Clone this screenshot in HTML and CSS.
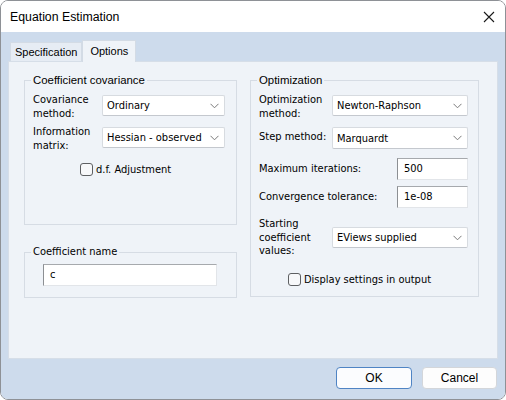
FILE: index.html
```html
<!DOCTYPE html>
<html>
<head>
<meta charset="utf-8">
<link rel="stylesheet" href="styles.css">
</head>
<body>
<div class="window">
  <div class="titlebar">
    <span class="title">Equation Estimation</span>
    <svg class="close" width="12" height="12" viewBox="0 0 12 12"><path d="M1 1 L11 11 M11 1 L1 11" stroke="#1a1a1a" stroke-width="1.1" fill="none"/></svg>
  </div>
  <div class="body">
    <div class="tabs">
      <div class="tab">Specification</div>
      <div class="tab active">Options</div>
    </div>
    <div class="panel">
      <div class="col">
        <fieldset class="group g-cov">
          <legend class="legend seg">Coefficient covariance</legend>
          <div class="row">
            <div class="label w69">Covariance<br>method:</div>
            <div class="select w123"><span>Ordinary</span><svg class="chev" width="9" height="6" viewBox="0 0 9 6"><path d="M0.5 0.8 L4.5 4.8 L8.5 0.8" stroke="#7a7a7a" fill="none"/></svg></div>
          </div>
          <div class="row">
            <div class="label w69">Information<br>matrix:</div>
            <div class="select w123"><span>Hessian - observed</span><svg class="chev" width="9" height="6" viewBox="0 0 9 6"><path d="M0.5 0.8 L4.5 4.8 L8.5 0.8" stroke="#7a7a7a" fill="none"/></svg></div>
          </div>
          <div class="check-row cr-left">
            <span class="box"></span><span>d.f. Adjustment</span>
          </div>
        </fieldset>
        <fieldset class="group g-name">
          <legend class="legend name-legend">Coefficient name</legend>
          <div class="input name-input">c</div>
        </fieldset>
      </div>
      <fieldset class="group g-opt">
        <legend class="legend seg">Optimization</legend>
        <div class="row">
          <div class="label w73">Optimization<br>method:</div>
          <div class="select w136"><span>Newton-Raphson</span><svg class="chev" width="9" height="6" viewBox="0 0 9 6"><path d="M0.5 0.8 L4.5 4.8 L8.5 0.8" stroke="#7a7a7a" fill="none"/></svg></div>
        </div>
        <div class="row step">
          <div class="label w73 mid">Step method:</div>
          <div class="select w136 tall"><span>Marquardt</span><svg class="chev" width="9" height="6" viewBox="0 0 9 6"><path d="M0.5 0.8 L4.5 4.8 L8.5 0.8" stroke="#7a7a7a" fill="none"/></svg></div>
        </div>
        <div class="row field r-max">
          <div class="label grow">Maximum iterations:</div>
          <div class="input num">500</div>
        </div>
        <div class="row field r-conv">
          <div class="label grow">Convergence tolerance:</div>
          <div class="input num">1e-08</div>
        </div>
        <div class="row r-start">
          <div class="label w73 lh13">Starting<br>coefficient<br>values:</div>
          <div class="select w136 s-start"><span>EViews supplied</span><svg class="chev" width="9" height="6" viewBox="0 0 9 6"><path d="M0.5 0.8 L4.5 4.8 L8.5 0.8" stroke="#7a7a7a" fill="none"/></svg></div>
        </div>
        <div class="check-row cr-right">
          <span class="box"></span><span>Display settings in output</span>
        </div>
      </fieldset>
    </div>
    <div class="buttons">
      <div class="btn default">OK</div>
      <div class="btn">Cancel</div>
    </div>
  </div>
</div>
</body>
</html>
```
FILE: styles.css
```css
html, body {
  margin: 0;
  padding: 0;
  background: #ffffff;
}
.window {
  width: 506px;
  height: 400px;
  box-sizing: border-box;
  border: 1px solid #8e9196;
  border-radius: 8px;
  overflow: hidden;
  display: flex;
  flex-direction: column;
  font-family: "DejaVu Sans", sans-serif;
  font-stretch: condensed;
  font-size: 11px;
  color: #000;
}
.titlebar {
  height: 31px;
  background: #ffffff;
  display: flex;
  align-items: center;
  justify-content: space-between;
  padding: 0 10px 0 9px;
  font-family: "Liberation Sans", sans-serif;
  font-stretch: normal;
  font-size: 12.3px;
}
.close { margin-right: 0; }
.body {
  flex: 1;
  background: #cddbec;
  padding: 7px 7px 0 7px;
  display: flex;
  flex-direction: column;
}
.tabs {
  display: flex;
  height: 22px;
  align-items: flex-end;
  padding-left: 2px;
  font-family: "Liberation Sans", sans-serif;
  font-stretch: normal;
  font-size: 11px;
}
.tab {
  height: 18px;
  line-height: 19px;
  padding: 0 4px;
  background: #e6ecf4;
  border: 1px solid #d3dbe5;
  border-bottom: none;
}
.tab.active {
  height: 21px;
  line-height: 20px;
  background: #eff3f8;
  padding: 0 7px;
  margin-left: 0;
  position: relative;
  top: 1px;
}
.panel {
  height: 298px;
  box-sizing: border-box;
  background: #eff3f8;
  border: 1px solid #d6dee8;
  padding: 11px 0 0 15px;
  display: grid;
  grid-template-columns: 213px 229px;
  column-gap: 13px;
  align-items: start;
}
.col {
  display: flex;
  flex-direction: column;
  gap: 20px;
}
.group {
  margin: 0;
  border: 1px solid #d6dce4;
  padding: 0 0 0 8px;
  min-width: 0;
}
.legend {
  padding: 0 2px;
  margin-left: -2px;
  line-height: 14px;
  font-size: 11px;
}
.legend.seg {
  font-family: "Liberation Sans", sans-serif;
  font-stretch: normal;
  font-size: 11.4px;
}
.name-legend { margin-left: -12px; }
.g-cov { height: 152px; box-sizing: border-box; padding-top: 6px; }
.g-name { height: 53px; box-sizing: border-box; padding: 5px 0 0 18px; }
.g-opt { height: 224px; box-sizing: border-box; padding-top: 6px; }
.row {
  display: flex;
  align-items: flex-start;
  margin-bottom: 4px;
}
.label {
  line-height: 14px;
  flex: none;
}
.lh13 { line-height: 13.5px; }
.w69 { width: 69px; }
.w73 { width: 73px; }
.grow { flex: 1; }
.select {
  box-sizing: border-box;
  height: 21px;
  margin-top: 2px;
  background: #ffffff;
  border: 1px solid #d7dbe0;
  border-bottom-color: #c4c8ce;
  border-radius: 2px;
  display: flex;
  align-items: center;
  justify-content: space-between;
  padding: 0 5px 0 4px;
}
.w123 { width: 123px; }
.w136 { width: 136px; }
.select.tall { height: 22px; }
.mid { align-self: center; }
.step { margin-top: 2px; margin-bottom: 9px; }
.input {
  box-sizing: border-box;
  background: #ffffff;
  border: 1px solid #e2e5e9;
  border-top-color: #a6a9ad;
  border-left-color: #8c8f93;
  height: 22px;
  line-height: 20px;
  padding-left: 6px;
}
.name-input { width: 174px; height: 22px; }
.field { align-items: center; padding-right: 10px; margin-bottom: 6px; }
.num { width: 71px; flex: none; }
.r-start { margin-top: 9px; }
.s-start { margin-top: 10px; height: 21px; }
.check-row {
  display: flex;
  align-items: center;
  gap: 3px;
}
.box {
  width: 11px;
  height: 11px;
  border: 1px solid #5d5f62;
  border-radius: 3px;
  background: #f7f8fa;
}
.cr-left { margin-top: 10px; padding-left: 47px; }
.cr-right { margin-top: 15px; padding-left: 29px; }
.buttons {
  display: flex;
  justify-content: flex-end;
  gap: 10px;
  margin-top: 8px;
  padding-right: 1px;
  font-family: "Liberation Sans", sans-serif;
  font-stretch: normal;
  font-size: 12px;
}
.btn {
  width: 75px;
  height: 22px;
  box-sizing: border-box;
  line-height: 20px;
  text-align: center;
  background: #fdfdfd;
  border: 1px solid #d3d6da;
  border-radius: 4px;
}
.btn.default {
  width: 76px;
  border: 1px solid #4f84c4;
  background: #fbfcfe;
}
```
